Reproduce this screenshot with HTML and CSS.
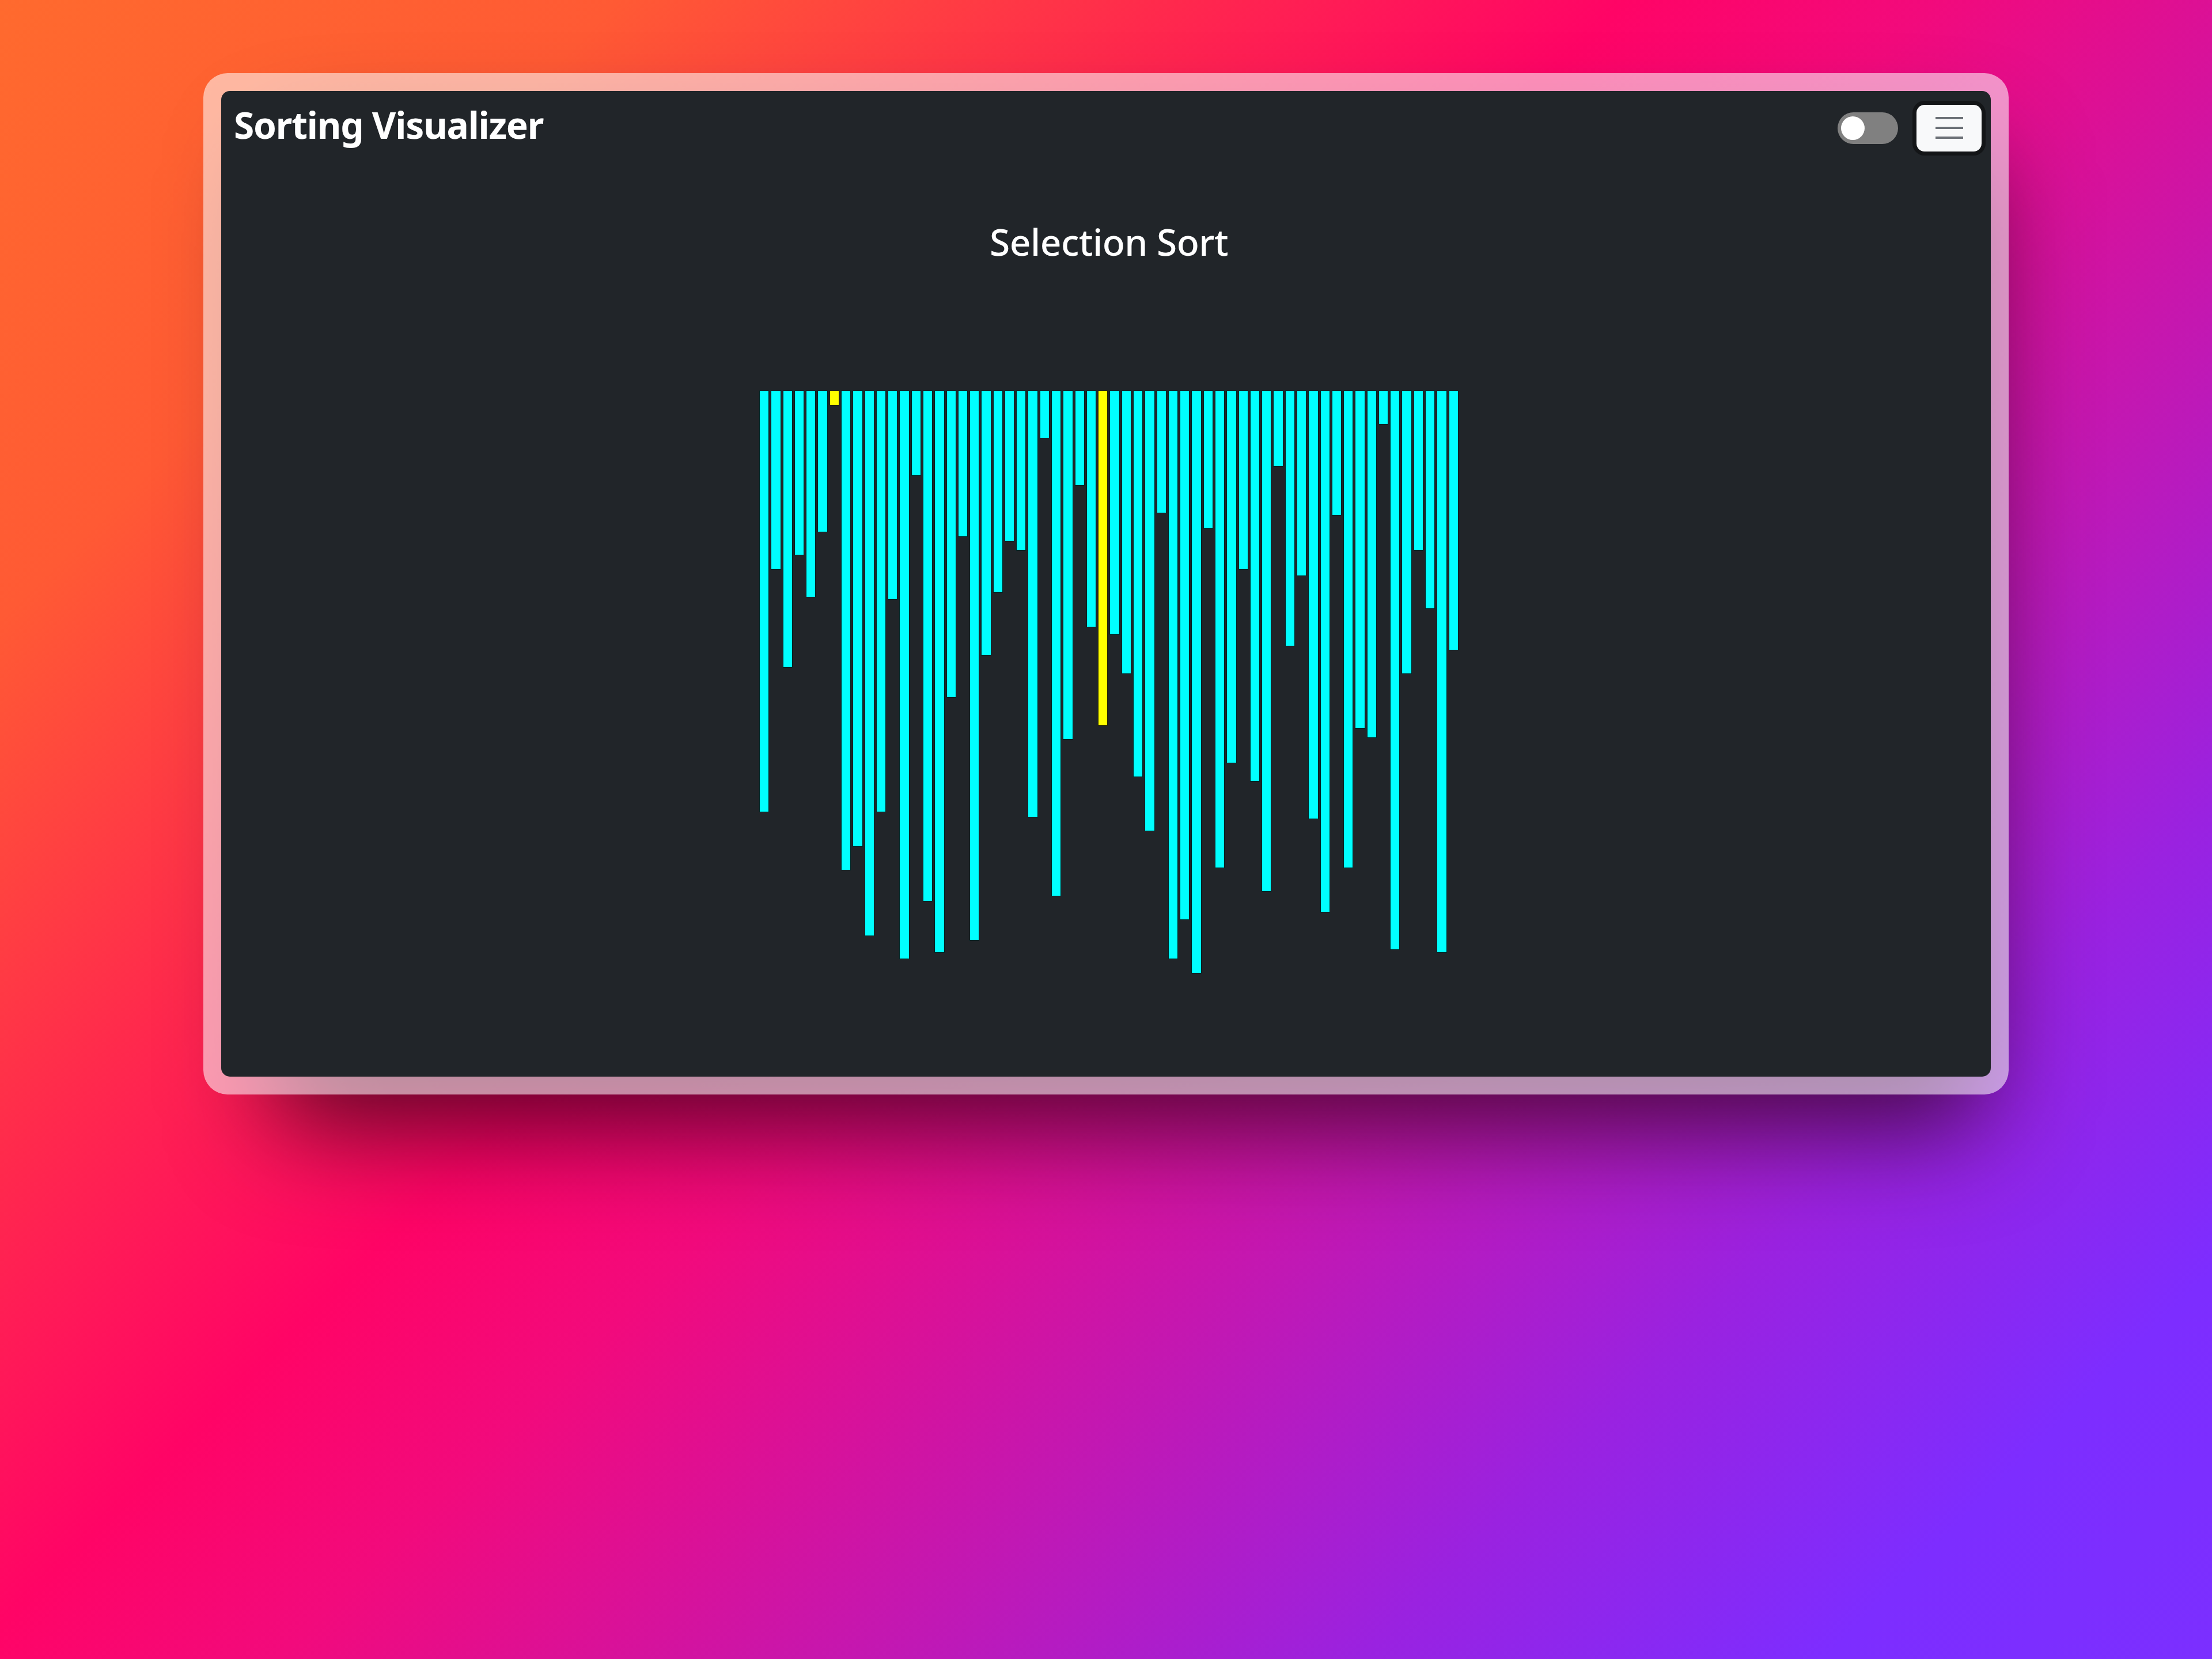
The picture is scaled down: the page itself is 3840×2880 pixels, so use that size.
FILE: index.html
```html
<!DOCTYPE html>
<html lang="en">
<head>
<meta charset="utf-8">
<title>Sorting Visualizer</title>
<link rel="stylesheet" href="styles.css">
</head>
<body>
<div class="page">
  <div class="frame">
    <div class="window">
      <header class="navbar">
        <span class="brand">Sorting Visualizer</span>
        <div class="controls">
          <span class="switch"><span class="knob"></span></span>
          <button class="menu-btn" type="button" aria-label="Menu">
            <svg class="menu-icon" width="48" height="38" viewBox="0 0 48 38">
              <path d="M0 2H48M0 19H48M0 36H48" stroke="#6c7177" stroke-width="4" fill="none"/>
            </svg>
          </button>
        </div>
      </header>
      <main class="content">
        <h1 class="algo-title">Selection Sort</h1>
        <div class="chart">
          <div class="bar" style="height:732px"></div>
          <div class="bar" style="height:311px"></div>
          <div class="bar" style="height:481px"></div>
          <div class="bar" style="height:286px"></div>
          <div class="bar" style="height:359px"></div>
          <div class="bar" style="height:246px"></div>
          <div class="bar active" style="height:26px"></div>
          <div class="bar" style="height:833px"></div>
          <div class="bar" style="height:792px"></div>
          <div class="bar" style="height:947px"></div>
          <div class="bar" style="height:732px"></div>
          <div class="bar" style="height:363px"></div>
          <div class="bar" style="height:987px"></div>
          <div class="bar" style="height:148px"></div>
          <div class="bar" style="height:887px"></div>
          <div class="bar" style="height:976px"></div>
          <div class="bar" style="height:533px"></div>
          <div class="bar" style="height:254px"></div>
          <div class="bar" style="height:955px"></div>
          <div class="bar" style="height:460px"></div>
          <div class="bar" style="height:351px"></div>
          <div class="bar" style="height:262px"></div>
          <div class="bar" style="height:278px"></div>
          <div class="bar" style="height:741px"></div>
          <div class="bar" style="height:83px"></div>
          <div class="bar" style="height:878px"></div>
          <div class="bar" style="height:606px"></div>
          <div class="bar" style="height:165px"></div>
          <div class="bar" style="height:411px"></div>
          <div class="bar active" style="height:582px"></div>
          <div class="bar" style="height:424px"></div>
          <div class="bar" style="height:492px"></div>
          <div class="bar" style="height:671px"></div>
          <div class="bar" style="height:765px"></div>
          <div class="bar" style="height:213px"></div>
          <div class="bar" style="height:987px"></div>
          <div class="bar" style="height:919px"></div>
          <div class="bar" style="height:1012px"></div>
          <div class="bar" style="height:240px"></div>
          <div class="bar" style="height:829px"></div>
          <div class="bar" style="height:647px"></div>
          <div class="bar" style="height:311px"></div>
          <div class="bar" style="height:679px"></div>
          <div class="bar" style="height:870px"></div>
          <div class="bar" style="height:132px"></div>
          <div class="bar" style="height:444px"></div>
          <div class="bar" style="height:322px"></div>
          <div class="bar" style="height:744px"></div>
          <div class="bar" style="height:906px"></div>
          <div class="bar" style="height:217px"></div>
          <div class="bar" style="height:829px"></div>
          <div class="bar" style="height:587px"></div>
          <div class="bar" style="height:603px"></div>
          <div class="bar" style="height:59px"></div>
          <div class="bar" style="height:971px"></div>
          <div class="bar" style="height:492px"></div>
          <div class="bar" style="height:278px"></div>
          <div class="bar" style="height:379px"></div>
          <div class="bar" style="height:976px"></div>
          <div class="bar" style="height:451px"></div>
        </div>
      </main>
    </div>
  </div>
</div>
</body>
</html>
```

FILE: styles.css
```css
html, body {
  margin: 0;
  padding: 0;
}

body {
  font-family: "Noto Sans", "Open Sans", sans-serif;
}

.page {
  position: relative;
  z-index: 0;
  box-sizing: border-box;
  width: 3840px;
  height: 2880px;
  padding: 127px 353px 0 353px;
  background: linear-gradient(135deg,
    #ff6a2e 0%,
    #ff5a34 16%,
    #ff2a4c 30%,
    #ff0466 42%,
    #f20a7c 50%,
    #c118b4 66%,
    #9a22e0 78%,
    #7d2dff 90%,
    #7b2fff 100%);
  overflow: hidden;
}

.frame {
  position: relative;
  padding: 31px;
  border-radius: 42px;
  background: rgba(255, 255, 255, 0.55);
}

.frame::before {
  content: "";
  position: absolute;
  left: 120px;
  right: 40px;
  top: 140px;
  bottom: -60px;
  z-index: -1;
  border-radius: 60px;
  background: rgba(40, 0, 20, 0.75);
  filter: blur(90px);
}

.window {
  display: flex;
  flex-direction: column;
  height: 1711px;
  border-radius: 15px;
  background: #212529;
  color: #ffffff;
}

.navbar {
  display: flex;
  align-items: center;
  justify-content: space-between;
  height: 128px;
  padding: 0 16px 0 22px;
}

.brand {
  font-size: 64px;
  font-weight: 700;
  line-height: 64px;
  margin-bottom: 11px;
  letter-spacing: -1.2px;
}

.controls {
  display: flex;
  align-items: center;
  gap: 32px;
}

.switch {
  display: flex;
  align-items: center;
  box-sizing: border-box;
  width: 105px;
  height: 55px;
  padding-left: 6px;
  border-radius: 28px;
  background: #808080;
}

.knob {
  width: 41px;
  height: 41px;
  border-radius: 50%;
  background: #ffffff;
}

.menu-btn {
  display: flex;
  align-items: center;
  justify-content: center;
  width: 113px;
  height: 81px;
  padding: 0;
  border: 0;
  border-radius: 14px;
  background: #f8f9fa;
  box-shadow: 0 0 0 7px #131517;
}

.menu-icon {
  display: block;
}

.content {
  display: flex;
  flex-direction: column;
  align-items: center;
  padding-left: 10px;
}

.algo-title {
  margin: 102px 0 0 0;
  font-size: 64px;
  font-weight: 500;
  line-height: 64px;
  letter-spacing: -0.5px;
}

.chart {
  display: flex;
  align-items: flex-start;
  gap: 3px;
  width: 1214px;
  margin-top: 226px;
}

.bar {
  flex: 1;
  box-sizing: border-box;
  border: 1px solid rgba(0, 0, 0, 0.85);
  background: #00ffff;
}

.bar.active {
  background: #ffff00;
}
```
